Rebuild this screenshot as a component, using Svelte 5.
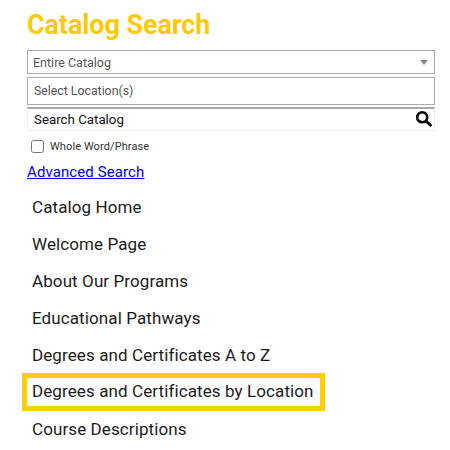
<script>
  const links = ['Catalog Home','Welcome Page','About Our Programs','Educational Pathways','Degrees and Certificates A to Z','Degrees and Certificates by Location','Course Descriptions'];
</script>

<div class="page">
  <h1>Catalog Search</h1>
  <div class="field select"><span>Entire Catalog</span><i class="arrow"></i></div>
  <div class="field location"><span>Select Location(s)</span></div>
  <div class="field search">
    <span>Search Catalog</span>
    <svg width="18" height="18" viewBox="0 0 18 18"><circle cx="7.2" cy="7.2" r="5" fill="none" stroke="#000" stroke-width="2.6"/><path d="M11 11l5.4 5" stroke="#000" stroke-width="3" fill="none"/></svg>
  </div>
  <label class="check"><input type="checkbox" /><span>Whole Word/Phrase</span></label>
  <a class="adv" href="#top">Advanced Search</a>
  <ul>
    {#each links as l, i}
      <li class:active={i === 5}>{l}</li>
    {/each}
  </ul>
</div>

<style>
  :global(body) { margin: 0; background: #fff; }
  .page { padding: 10px 15px 0 27px; height: 440px; overflow: hidden; font-family: Roboto, sans-serif; color: #1d1d1d; }
  h1 { margin: 0 0 10px; font-size: 26.8px; line-height: 30px; font-weight: 700; color: #ffc905; }
  .field { display: flex; align-items: center; justify-content: space-between; box-sizing: border-box; border: 1px solid #aaa; padding: 0 5px; margin-bottom: 3px; }
  .select { height: 24px; font-size: 12.5px; color: #555; }
  .location { height: 28px; margin-bottom: 2px; font-size: 12.3px; color: #555; padding-left: 6px; }
  .search { height: 24px; margin-bottom: 0; padding: 0 1px 1px 6px; font-size: 13.3px; color: #111; border-color: #aaa #eee #eee #eee; border-width: 2px 1px 1px 1px; }
  .arrow { width: 0; height: 0; border-left: 4px solid transparent; border-right: 4px solid transparent; border-top: 5px solid #888; margin-right: 1px; }
  .check { display: flex; align-items: center; gap: 6px; margin: 8px 0 0 4px; height: 14px; font-size: 11px; color: #333; letter-spacing: 0.1px; }
  .check input { margin: 0; width: 13px; height: 13px; }
  .adv { display: block; margin-top: 9px; font-size: 15px; line-height: 20px; color: #0000ee; text-decoration: underline; letter-spacing: 0.1px; }
  ul { list-style: none; margin: 6px 0 0; padding: 0; }
  li { height: 37px; line-height: 38px; padding-left: 5px; font-size: 17px; color: #1b1b1b; box-sizing: border-box; letter-spacing: 0.1px; }
  li.active { width: 303px; margin-left: -5px; height: 38px; margin-bottom: -1px; padding-left: 5px; border: 5px solid #ffcd05; line-height: 27px; }
</style>
